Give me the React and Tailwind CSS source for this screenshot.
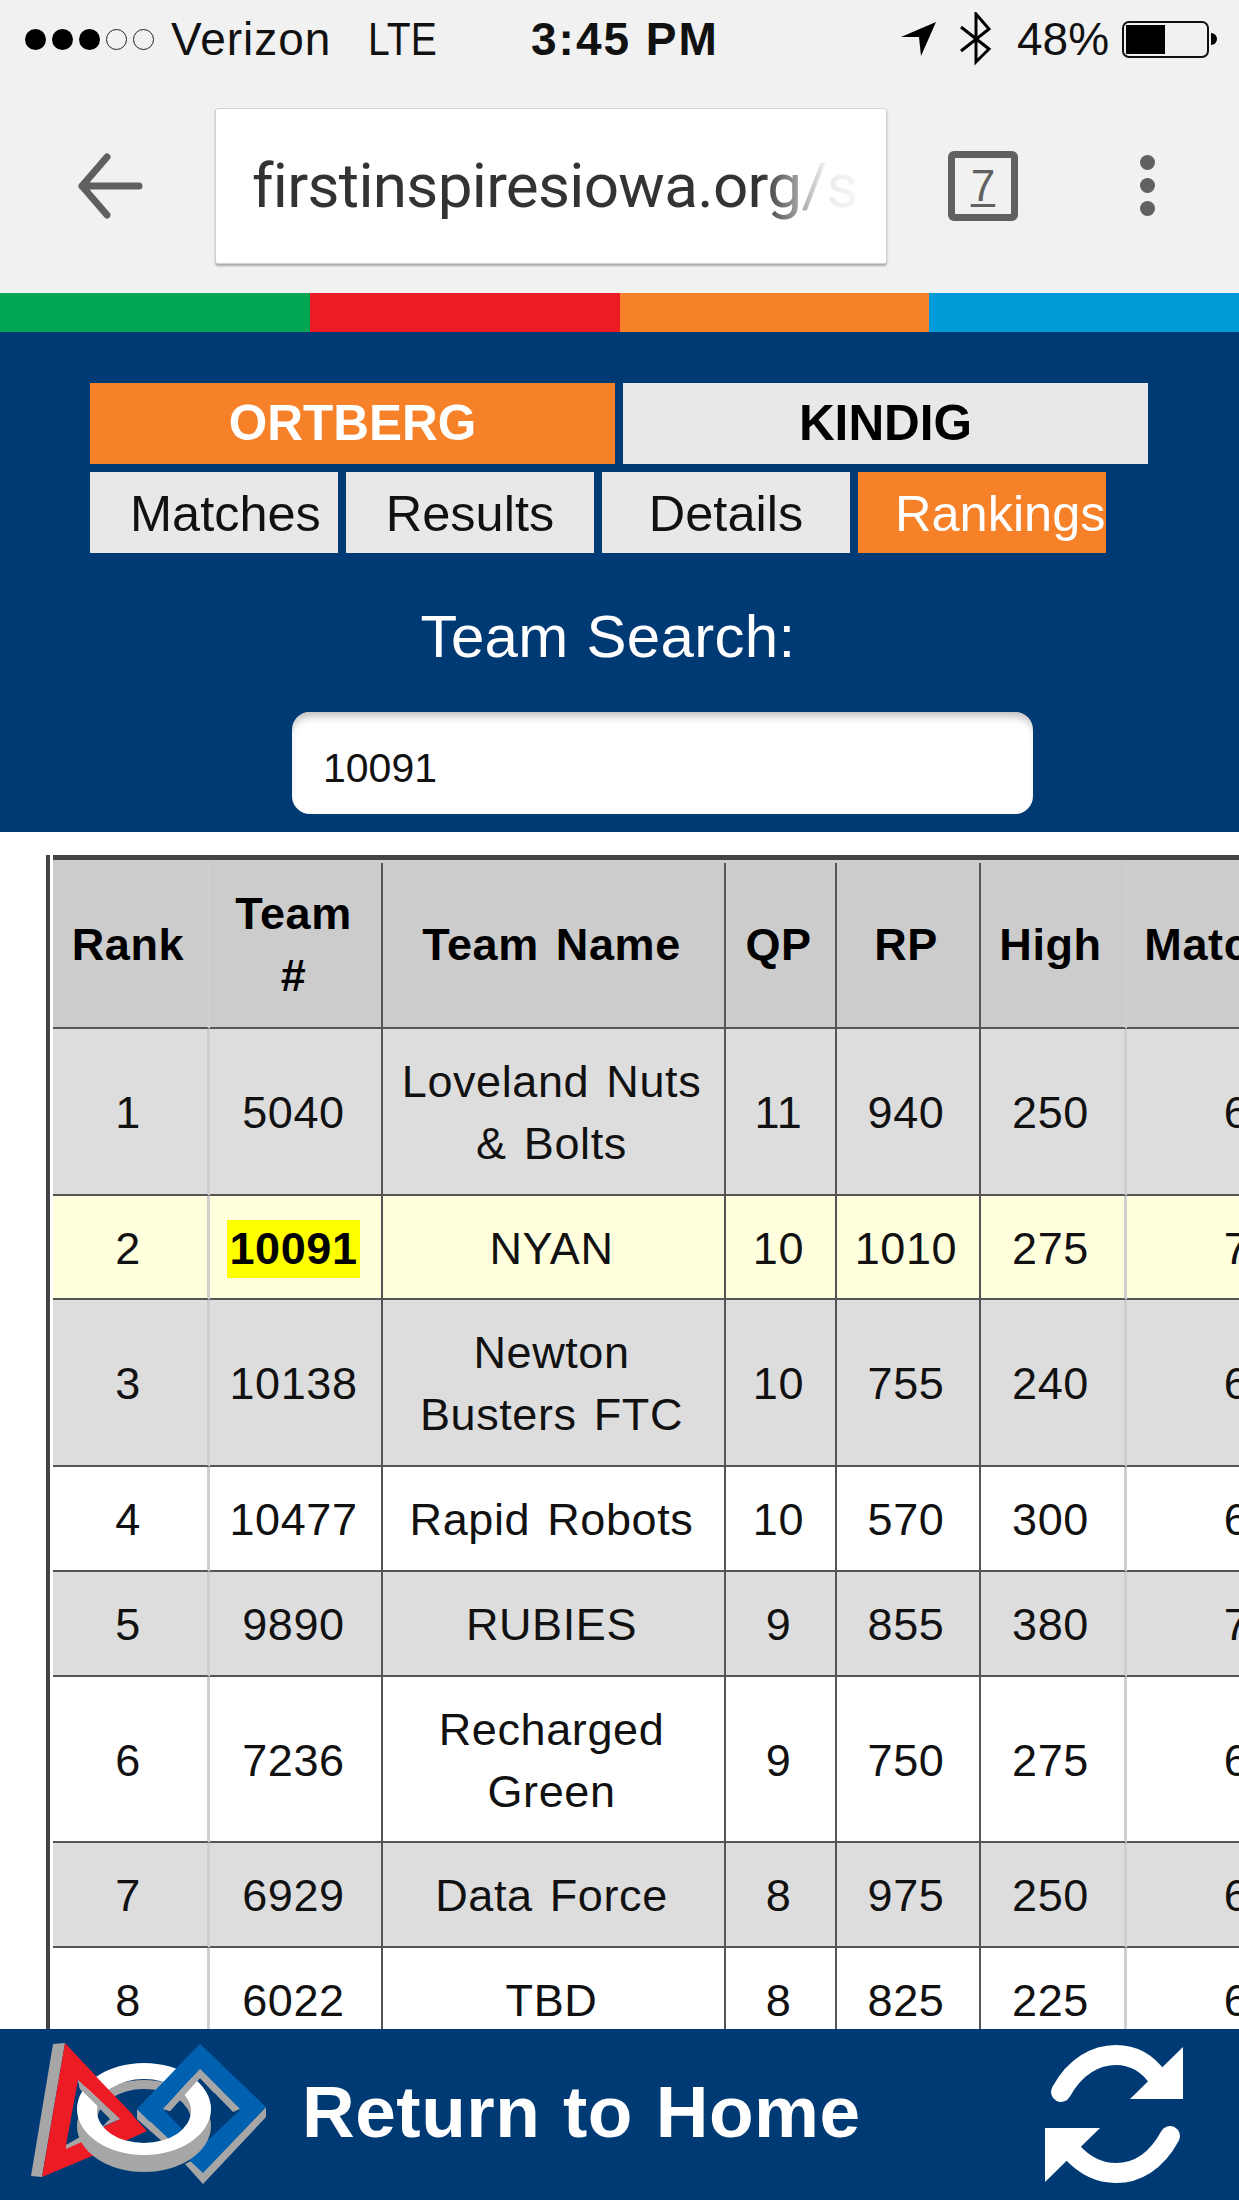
import React from "react";

const header = ["Rank", "Team #", "Team Name", "QP", "RP", "High", "Matches"];
const rows = [
  ["1", "5040", "Loveland Nuts & Bolts", "11", "940", "250", "6"],
  ["2", "10091", "NYAN", "10", "1010", "275", "7"],
  ["3", "10138", "Newton Busters FTC", "10", "755", "240", "6"],
  ["4", "10477", "Rapid Robots", "10", "570", "300", "6"],
  ["5", "9890", "RUBIES", "9", "855", "380", "7"],
  ["6", "7236", "Recharged Green", "9", "750", "275", "6"],
  ["7", "6929", "Data Force", "8", "975", "250", "6"],
  ["8", "6022", "TBD", "8", "825", "225", "6"],
];

const rowBg = (i) => {
  if (i === 1) return "bg-[#ffffdd]";
  if (i === 0 || i === 2 || i === 4 || i === 6) return "bg-[#dddddd]";
  return "bg-white";
};

const edge = (c) =>
  c === 0 || c === 5
    ? "border-r-[3px] border-r-[#cfcfcf]"
    : "border-r-[2px] border-r-[#555555]";

function StatusBar() {
  return (
    <div className="h-[78px] flex items-center text-[46px] text-[#111] leading-none">
      <div className="ml-[25px] flex gap-[6px]">
        <span className="w-[21px] h-[21px] rounded-full bg-black" />
        <span className="w-[21px] h-[21px] rounded-full bg-black" />
        <span className="w-[21px] h-[21px] rounded-full bg-black" />
        <span className="w-[21px] h-[21px] rounded-full border-[1.5px] border-[#222]" />
        <span className="w-[21px] h-[21px] rounded-full border-[1.5px] border-[#222]" />
      </div>
      <span className="ml-[17px] w-[197px] tracking-[1px]">Verizon</span>
      <span className="w-[163px] origin-left scale-x-[0.85]">LTE</span>
      <span className="font-bold tracking-[2px] w-[370px]">3:45 PM</span>
      <svg width="36" height="36" viewBox="0 0 36 36">
        <path d="M0 16 L35 1 L20 35 L18 16 Z" fill="#000" />
      </svg>
      <svg width="34" height="54" viewBox="0 0 34 54" className="ml-[22px]">
        <path d="M2 39 L30 17 L17 2 V50 L30 37 L2 15" fill="none" stroke="#000" strokeWidth="3" />
      </svg>
      <span className="ml-[24px]">48%</span>
      <div className="ml-[13px] w-[87px] h-[37px] rounded-[7px] border-2 border-[#111] p-[2px]">
        <div className="w-[39px] h-full bg-black" />
      </div>
      <span className="ml-[2px] w-[6px] h-[12px] rounded-r-full bg-black" />
    </div>
  );
}

function Chrome() {
  return (
    <div className="h-[215px] flex items-center">
      <svg width="66" height="66" viewBox="0 0 66 66" className="ml-[77px]">
        <path d="M30 4 L5 33 L30 62 M5 33 H62" fill="none" stroke="#5f5f5f" strokeWidth="7" strokeLinecap="round" strokeLinejoin="round" />
      </svg>
      <div className="relative ml-[72px] w-[672px] h-[156px] bg-white rounded-[3px] border border-[#d0d0d0] shadow-[0_2px_2px_#aaaaaa] overflow-hidden flex items-center">
        <span className="pl-[36px] whitespace-nowrap text-[62px] text-[#333] font-['Roboto',sans-serif] tracking-[-0.7px]">firstinspiresiowa.org/s</span>
        <div className="absolute right-0 top-0 h-full w-[125px] bg-gradient-to-r from-white/0 via-white/90 to-white" />
      </div>
      <div className="ml-[61px] w-[70px] h-[70px] rounded-[6px] border-[7px] border-[#616161] flex items-center justify-center">
        <span className="text-[44px] leading-[46px] text-[#616161] underline decoration-[3px] underline-offset-[3px]">7</span>
      </div>
      <div className="ml-[122px] flex flex-col gap-[8px]">
        <span className="w-[15px] h-[15px] rounded-full bg-[#616161]" />
        <span className="w-[15px] h-[15px] rounded-full bg-[#616161]" />
        <span className="w-[15px] h-[15px] rounded-full bg-[#616161]" />
      </div>
    </div>
  );
}

function Nav() {
  return (
    <div className="bg-[#003a75] h-[500px] pt-[51px]">
      <div className="flex gap-[8px] ml-[90px] text-[49.5px] font-bold">
        <div className="w-[525px] h-[81px] bg-[#f68128] text-white flex items-center justify-center">ORTBERG</div>
        <div className="w-[525px] h-[81px] bg-[#e8e8e8] text-black flex items-center justify-center">KINDIG</div>
      </div>
      <div className="flex gap-[8px] ml-[90px] mt-[8px] text-[50.5px]">
        <div className="w-[248px] h-[81px] pt-[2px] bg-[#e8e8e8] text-[#111] flex items-center pl-[40px] whitespace-nowrap">Matches</div>
        <div className="w-[248px] h-[81px] pt-[2px] bg-[#e8e8e8] text-[#111] flex items-center justify-center">Results</div>
        <div className="w-[248px] h-[81px] pt-[2px] bg-[#e8e8e8] text-[#111] flex items-center justify-center">Details</div>
        <div className="w-[248px] h-[81px] pt-[2px] bg-[#f68128] text-white flex items-center pl-[37px] whitespace-nowrap overflow-hidden">Rankings</div>
      </div>
      <div className="mt-[49px] h-[70px] leading-[70px] text-[60px] tracking-[0.3px] [word-spacing:1px] text-white text-center pr-[23px]">Team Search:</div>
      <input
        readOnly
        value="10091"
        className="block mt-[40px] ml-[292px] w-[741px] h-[102px] rounded-[18px] bg-white pl-[31px] pt-[10px] text-[41px] text-[#111] shadow-[inset_0_8px_8px_-4px_#bbbbbb] outline-none"
      />
    </div>
  );
}

function RankTable() {
  return (
    <div className="mt-[23px] ml-[46px] flex-1 min-h-0 overflow-hidden border-l-[4px] border-l-[#444444] pl-[3px]">
      <div className="w-[1299px] border-t-[5px] border-t-[#444444]">
        <div className="h-[3px] bg-[#cccccc]" />
        <table className="table-fixed border-separate border-spacing-0 w-[1299px] text-[45px] leading-[62px] text-center text-[#111] tracking-[0.6px] [word-spacing:4px]">
          <colgroup>
            <col className="w-[157px]" />
            <col className="w-[173px]" />
            <col className="w-[343px]" />
            <col className="w-[111px]" />
            <col className="w-[144px]" />
            <col className="w-[146px]" />
            <col className="w-[225px]" />
          </colgroup>
          <thead>
            <tr>
              {header.map((h, c) => (
                <th
                  key={h}
                  className={`h-[166px] align-middle font-bold text-black bg-[#cccccc] border-b-2 border-b-[#555555] pl-[8px] pr-[12px] ${edge(c)}`}
                >
                  {h}
                </th>
              ))}
            </tr>
          </thead>
          <tbody>
            {rows.map((r, i) => (
              <tr key={r[0]}>
                {r.map((v, c) => (
                  <td
                    key={c}
                    className={`pt-[22px] ${i === 1 || i === 5 ? "pb-[18px]" : "pb-[19px]"} pl-[17px] pr-[21px] align-middle font-normal border-b-2 border-b-[#555555] ${rowBg(i)} ${edge(c)}`}
                  >
                    {v === "10091" ? (
                      <span className="inline-block -mx-[20px] px-[2px] leading-[58px] font-bold text-black bg-[#ffff00]">{v}</span>
                    ) : (
                      v
                    )}
                  </td>
                ))}
              </tr>
            ))}
          </tbody>
        </table>
      </div>
    </div>
  );
}

function Logo() {
  return (
    <svg width="240" height="145" viewBox="30 33 240 145" className="ml-[30px] shrink-0">
      <polygon points="53,35 65,34 42,168 31,167" fill="#a6a6a6" />
      <path fillRule="evenodd" d="M65 34 L147 122 L92 147 L42 168 Z M78 71 L66 136 L120 110 Z" fill="#ed1c24" />
      <polygon points="78,71 120,110 102,118 110,110 80,80" fill="#a6a6a6" />
      <polygon points="66,136 80,128 84,132 66,140" fill="#a6a6a6" />
      <polygon points="266,98 266,108 203,175 185,155 195,150 203,163" fill="#a6a6a6" />
      <polygon points="137,100 137,110 165,135 170,128" fill="#a6a6a6" />
      <path fillRule="evenodd" d="M200 35 L266 98 L203 164 L188 150 L240 101 L200 60 L163 100 L182 120 L170 131 L137 100 Z" fill="#0061b0" />
      <polygon points="163,100 200,60 240,100 233,103 200,69 170,102" fill="#a6a6a6" />
      <path
        fillRule="evenodd"
        d="M77 117 A67 46 0 1 0 211 117 A67 46 0 1 0 77 117 Z M97 112 A47 32 0 1 0 191 112 A47 32 0 1 0 97 112 Z"
        fill="#a6a6a6"
      />
      <path
        fillRule="evenodd"
        d="M77 100 A67 46 0 1 0 211 100 A67 46 0 1 0 77 100 Z M97 102 A47 32 0 1 0 191 102 A47 32 0 1 0 97 102 Z"
        fill="#ffffff"
      />
      <polygon points="84,55 134,107 120,110 78,71" fill="#ed1c24" />
      <polygon points="78,71 120,110 113,112 80,80" fill="#a6a6a6" />
      <polygon points="137,100 200,35 222,56 200,60 163,100 157,106 150,113" fill="#0061b0" />
      <polygon points="163,100 200,60 222,82 214,84 200,69 170,102" fill="#a6a6a6" />
    </svg>
  );
}

function SyncIcon() {
  return (
    <svg width="140" height="140" viewBox="45 25 140 140" className="shrink-0 ml-auto mr-[54px]">
      <path d="M61 72 C75 46 96 35 116 35 C134 35 148 44 158 58" fill="none" stroke="#fff" strokeWidth="20" strokeLinecap="round" />
      <polygon points="183,27 183,79 130,79" fill="#fff" />
      <path d="M170 116 C156 142 136 153 116 153 C98 153 84 145 72 132" fill="none" stroke="#fff" strokeWidth="20" strokeLinecap="round" />
      <polygon points="45,162 45,108 100,108" fill="#fff" />
    </svg>
  );
}

function Footer() {
  return (
    <div className="h-[171px] shrink-0 bg-[#003a75] flex items-center">
      <Logo />
      <span className="ml-[32px] pb-[5px] text-[73px] tracking-[0.5px] [word-spacing:2px] font-bold text-white whitespace-nowrap">Return to Home</span>
      <SyncIcon />
    </div>
  );
}

export default function App() {
  return (
    <div className="w-[1239px] h-[2200px] flex flex-col overflow-hidden bg-white font-['Liberation_Sans',Arial,sans-serif]">
      <div className="bg-[#f1f1f1] shrink-0">
        <StatusBar />
        <Chrome />
      </div>
      <div className="flex h-[39px] shrink-0">
        <div className="flex-1 bg-[#00a651]" />
        <div className="flex-1 bg-[#ed1c24]" />
        <div className="flex-1 bg-[#f68128]" />
        <div className="flex-1 bg-[#009bd8]" />
      </div>
      <Nav />
      <RankTable />
      <Footer />
    </div>
  );
}
